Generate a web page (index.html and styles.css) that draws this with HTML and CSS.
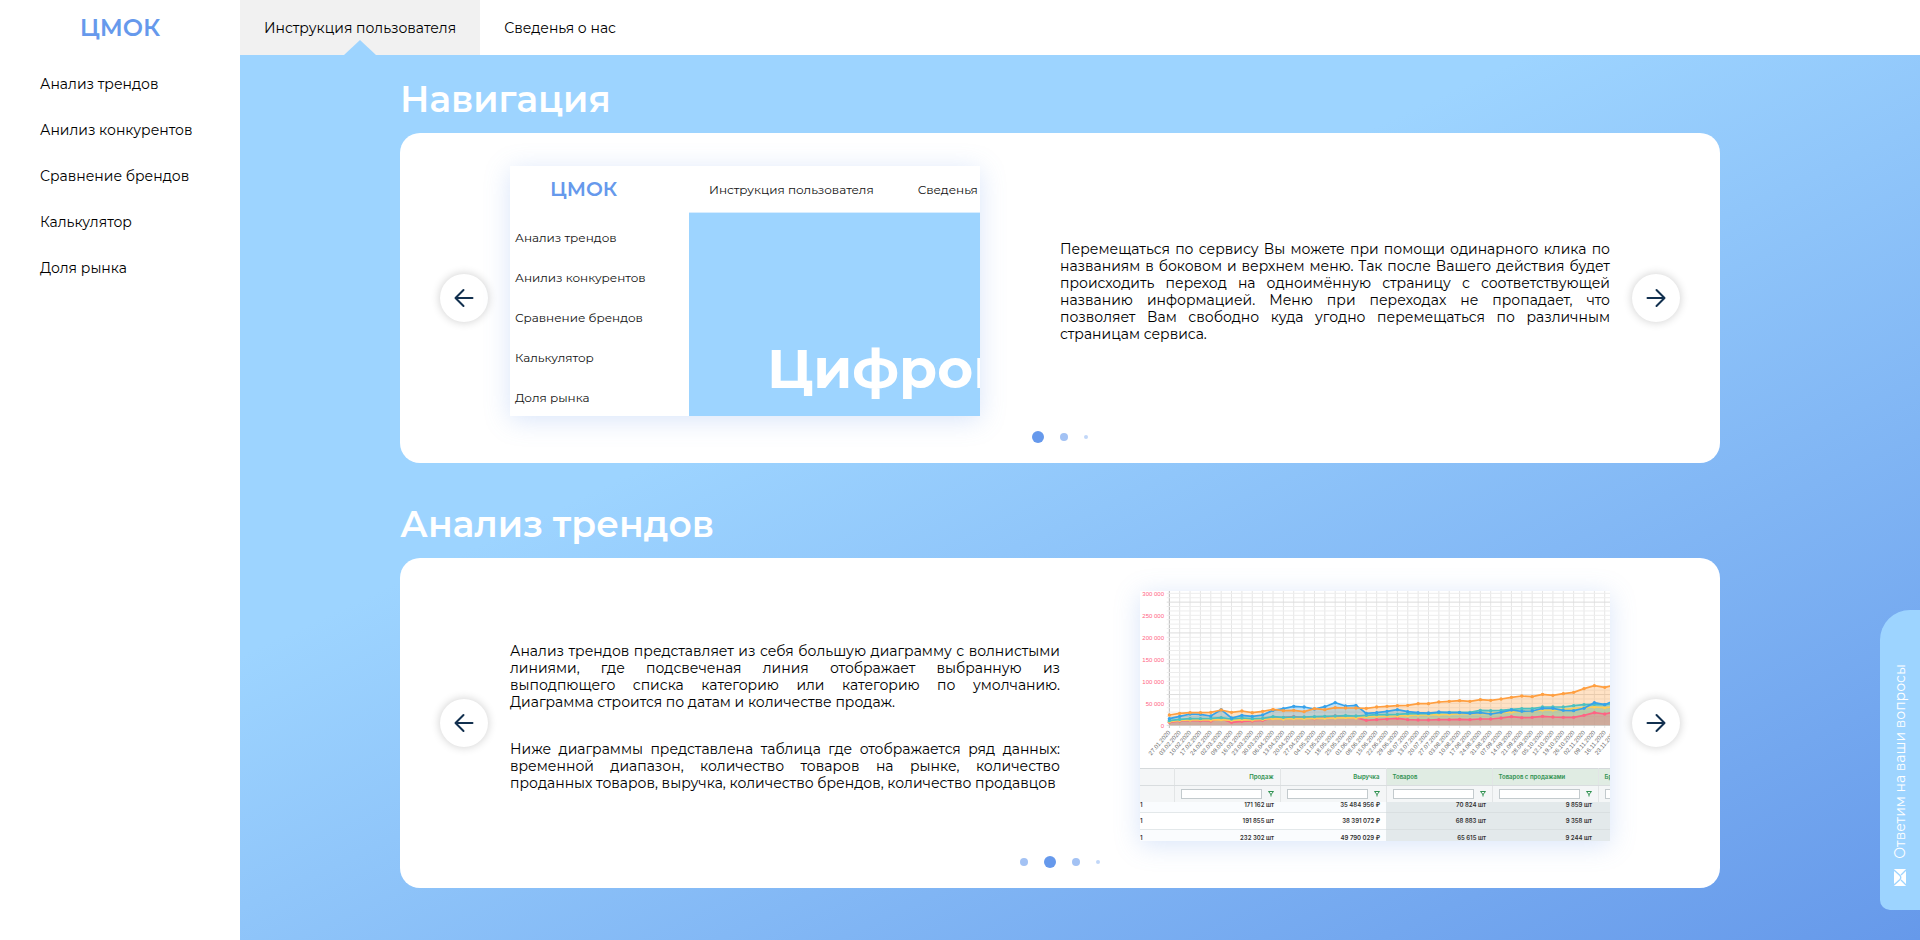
FILE: index.html
```
<!DOCTYPE html>
<html lang="ru">
<head>
<meta charset="utf-8">
<title>ЦМОК — Инструкция пользователя</title>
<link rel="stylesheet" href="styles.css">
</head>
<body>
<aside class="sidebar">
  <a class="logo" href="#">ЦМОК</a>
  <nav class="side-nav">
    <a href="#">Анализ трендов</a>
    <a href="#">Анилиз конкурентов</a>
    <a href="#">Сравнение брендов</a>
    <a href="#">Калькулятор</a>
    <a href="#">Доля рынка</a>
  </nav>
</aside>
<div class="page">
  <header class="topbar">
    <a class="tab tab-active" href="#">Инструкция пользователя</a>
    <a class="tab" href="#">Сведенья о нас</a>
  </header>
  <main class="content">
    <section class="section">
      <h2 class="section-title">Навигация</h2>
      <div class="card">
        <button class="arrow" type="button" aria-label="Назад">
          <svg viewBox="0 0 20 20"><path d="M18.500 10H2M9.500 2L1.500 10L9.500 18"/></svg>
        </button>
        <div class="card-body">
          <div class="slide">
            <div class="picture site">
              <div class="site-side">
                <span class="site-logo">ЦМОК</span>
                <span>Анализ трендов</span>
                <span>Анилиз конкурентов</span>
                <span>Сравнение брендов</span>
                <span>Калькулятор</span>
                <span>Доля рынка</span>
              </div>
              <div class="site-main">
                <div class="site-top"><span>Инструкция пользователя</span><span>Сведенья</span></div>
                <div class="site-hero">Цифров</div>
              </div>
            </div>
            <div class="text">
              <p>Перемещаться по сервису Вы можете при помощи одинарного клика по названиям в боковом и верхнем меню. Так после Вашего действия будет происходить переход на одноимённую страницу с соответствующей названию информацией. Меню при переходах не пропадает, что позволяет Вам свободно куда угодно перемещаться по различным страницам сервиса.</p>
            </div>
          </div>
          <div class="dots"><i class="dot dot-current"></i><i class="dot"></i><i class="dot dot-far"></i></div>
        </div>
        <button class="arrow" type="button" aria-label="Вперёд">
          <svg viewBox="0 0 20 20"><path d="M1.500 10H18M10.500 2L18.500 10L10.500 18"/></svg>
        </button>
      </div>
    </section>
    <section class="section">
      <h2 class="section-title">Анализ трендов</h2>
      <div class="card">
        <button class="arrow" type="button" aria-label="Назад">
          <svg viewBox="0 0 20 20"><path d="M18.500 10H2M9.500 2L1.500 10L9.500 18"/></svg>
        </button>
        <div class="card-body">
          <div class="slide">
            <div class="text">
              <p>Анализ трендов представляет из себя большую диаграмму с волнистыми линиями, где подсвеченая линия отображает выбранную из выподпющего списка категорию или категорию по умолчанию. Диаграмма строится по датам и количестве продаж.</p>
              <p>Ниже диаграммы представлена таблица где отображается ряд данных: временной диапазон, количество товаров на рынке, количество проданных товаров, выручка, количество брендов, количество продавцов</p>
            </div>
            <div class="picture report">
              <svg class="chart" id="chart" viewBox="0 0 1410 531" role="img" aria-label="Диаграмма продаж по датам"></svg>
              <table class="sales">
                <thead>
                  <tr><th></th><th>Продаж</th><th>Выручка</th><th class="goods">Товаров</th><th class="goods">Товаров с продажами</th><th class="goods">Бр</th></tr>
                  <tr class="filters">
                    <td></td>
                    <td><label><input type="text" aria-label="Фильтр: продаж"><svg viewBox="0 0 6 6"><path d="M.5 .5H5.500L3 3.500ZM3 3V5.500"/></svg></label></td>
                    <td><label><input type="text" aria-label="Фильтр: выручка"><svg viewBox="0 0 6 6"><path d="M.5 .5H5.500L3 3.500ZM3 3V5.500"/></svg></label></td>
                    <td><label><input type="text" aria-label="Фильтр: товаров"><svg viewBox="0 0 6 6"><path d="M.5 .5H5.500L3 3.500ZM3 3V5.500"/></svg></label></td>
                    <td><label><input type="text" aria-label="Фильтр: товаров с продажами"><svg viewBox="0 0 6 6"><path d="M.5 .5H5.500L3 3.500ZM3 3V5.500"/></svg></label></td>
                    <td><label><input type="text" aria-label="Фильтр: брендов"><svg viewBox="0 0 6 6"><path d="M.5 .5H5.500L3 3.500ZM3 3V5.500"/></svg></label></td>
                  </tr>
                </thead>
                <tbody>
                  <tr class="row-cut"><td class="edge">1</td><td>171 162 шт</td><td>35 484 956 ₽</td><td>70 824 шт</td><td>9 859 шт</td><td></td></tr>
                  <tr><td class="edge">1</td><td>191 855 шт</td><td>38 391 072 ₽</td><td>68 883 шт</td><td>9 358 шт</td><td></td></tr>
                  <tr><td class="edge">1</td><td>232 302 шт</td><td>49 790 029 ₽</td><td>65 615 шт</td><td>9 244 шт</td><td></td></tr>
                </tbody>
              </table>
            </div>
          </div>
          <div class="dots"><i class="dot"></i><i class="dot dot-current"></i><i class="dot"></i><i class="dot dot-far"></i></div>
        </div>
        <button class="arrow" type="button" aria-label="Вперёд">
          <svg viewBox="0 0 20 20"><path d="M1.500 10H18M10.500 2L18.500 10L10.500 18"/></svg>
        </button>
      </div>
    </section>
  </main>
</div>
<button class="chat" type="button">
  <svg viewBox="0 0 12 17"><rect width="12" height="17" rx="1" fill="#fff"/><path d="M0 1L6 6.500Q7.500 8.500 6 10.500L0 16M12 1L7 6M12 16L7 11" fill="none" stroke="#9dd4ff" stroke-width="1.300"/></svg>
  <span>Ответим на ваши вопросы</span>
</button>
<script src="chart.js"></script>
</body>
</html>
```
FILE: styles.css
```
* { box-sizing: border-box; }

body {
  margin: 0;
  min-height: 100vh;
  display: grid;
  grid-template-columns: 240px 1fr;
  font: 400 14px/17px "Montserrat", "Open Sans", sans-serif;
  color: #000;
  background: #fff;
}

a { color: inherit; text-decoration: none; }
button { border: 0; padding: 0; font: inherit; cursor: pointer; }

/* Sidebar */
.sidebar { display: flex; flex-direction: column; }
.logo {
  height: 55px;
  line-height: 55px;
  text-align: center;
  font-size: 24px;
  font-weight: 600;
  color: #6699ec;
}
.side-nav { display: flex; flex-direction: column; padding-top: 6px; }
.side-nav a { padding-left: 40px; line-height: 46px; }

/* Top bar */
.page { display: flex; flex-direction: column; min-width: 0; }
.topbar { display: flex; height: 55px; }
.tab { position: relative; line-height: 57px; padding: 0 24px; }
.tab-active { background: #f1f1f1; }
.tab-active::after {
  content: "";
  position: absolute;
  left: 50%;
  bottom: 0;
  margin-left: -16px;
  border: 16px solid transparent;
  border-top: 0;
  border-bottom: 15px solid #9dd4ff;
}

/* Content */
.content {
  flex: 1;
  display: flex;
  flex-direction: column;
  gap: 37px;
  padding: 20px 80px 52px 40px;
  background: linear-gradient(155deg, #9dd4ff 36%, #6699ea 100%);
}
.section { width: 100%; max-width: 1320px; margin: 0 auto; }
.section-title {
  margin: 0 0 10px;
  font-size: 36px;
  line-height: 48px;
  font-weight: 600;
  color: #fff;
}
.card {
  display: flex;
  align-items: center;
  gap: 22px;
  padding: 0 40px;
  border-radius: 20px;
  background: #fff;
}
.card-body { flex: 1; min-width: 0; padding: 33px 0 20px; }
.slide { display: flex; align-items: center; gap: 80px; }
.arrow {
  flex: none;
  display: grid;
  place-items: center;
  width: 48px;
  height: 48px;
  border-radius: 50%;
  background: #fff;
  box-shadow: 0 0 10px rgba(0, 0, 0, .2);
}
.arrow svg {
  width: 20px;
  height: 20px;
  fill: none;
  stroke: #12304f;
  stroke-width: 2;
  stroke-linecap: round;
  stroke-linejoin: round;
}
.text { flex: 1; padding-top: 2px; text-align: justify; }
.text p { margin: 0; }
.text p + p { margin-top: 30px; }

.dots {
  display: flex;
  align-items: center;
  justify-content: center;
  gap: 16px;
  height: 12px;
  margin-top: 15px;
}
.dot { width: 8px; height: 8px; border-radius: 50%; background: #a3c2f4; }
.dot-current { width: 12px; height: 12px; background: #6699ec; }
.dot-far { width: 4px; height: 4px; background: #c2d7f8; }

.picture {
  flex: none;
  width: 470px;
  height: 250px;
  overflow: hidden;
  background: #fff;
  box-shadow: 0 4px 24px rgba(102, 153, 236, .25);
}

/* Site picture */
.site { display: flex; font-size: 12px; white-space: nowrap; color: #111; }
.site-side { flex: none; width: 179px; display: flex; flex-direction: column; padding-left: 5px; line-height: 40px; }
.site-side span { flex: none; }
.site-logo { height: 52px; padding-left: 35px; line-height: 46px; font-size: 20px; font-weight: 600; color: #6699ec; }
.site-main { flex: 1; min-width: 0; display: flex; flex-direction: column; }
.site-top { display: flex; gap: 44px; height: 47px; padding-left: 20px; line-height: 47px; border-bottom: 1px solid #d8edff; }
.site-hero {
  flex: 1;
  padding: 120px 0 0 78px;
  line-height: 72px;
  font-size: 55px;
  font-weight: 700;
  color: #fff;
  background: #9dd4ff;
}

/* Report picture */
.chart { display: block; width: 470px; height: 177px; }
.chart text { font-family: "Liberation Sans", sans-serif; }
.sales {
  width: 562px;
  table-layout: fixed;
  border-collapse: collapse;
  font: 600 6px/8px Inter, sans-serif;
  color: #333;
}
.sales th, .sales td { width: 106px; height: 17px; padding: 0 6px; text-align: right; font-weight: 600; }
.sales th:first-child { width: 34px; }
.sales thead { background: #f4f6f7; color: #2f9150; }
.sales th { border-top: 1px solid #d5d9db; border-right: 1px solid #e2e5e6; border-bottom: 1px solid #d9dddf; }
.sales th.goods { text-align: left; background: #e0ece3; }
.sales .filters td { height: 16px; border-right: 1px solid #e2e5e6; }
.sales label { display: flex; align-items: center; gap: 6px; }
.sales input { flex: 1; min-width: 0; height: 10px; padding: 0; border: 1px solid #c3cacd; background: #fff; font: inherit; }
.sales label svg { width: 6px; height: 6px; fill: none; stroke: #2f9150; }
.sales tbody td { border-bottom: 1px solid #e3e8ea; background: #fff; }
.sales tbody tr:nth-child(odd) td { background: #fafcfe; }
.sales tbody .row-cut td { height: 11px; line-height: 6px; vertical-align: top; }
.sales tbody tr td:nth-child(n+4) { background: #e3e9eb; border-color: #d9dfe1; }
.sales tbody .edge { padding: 0; text-align: left; }

/* Contact tab */
.chat {
  position: fixed;
  right: 0;
  bottom: 30px;
  display: flex;
  flex-direction: column-reverse;
  align-items: center;
  justify-content: flex-start;
  gap: 10px;
  width: 40px;
  height: 300px;
  padding-bottom: 24px;
  border-radius: 30px 0 0 10px;
  color: #fff;
  background: #9dd4ff;
}
.chat svg { width: 12px; height: 17px; }
.chat span { writing-mode: vertical-rl; transform: rotate(180deg); white-space: nowrap; }
```
FILE: chart.js
```
// Sales chart: weekly points, one filled line per category.
const svg = document.getElementById('chart');
const X0 = 88, STEP = 31.1, BASE = 403, OFFSET = 63;
const series = [
  ['#ff9f40', [435,430,428,428,427,420,427,423,428,424,418,422,421,425,416,419,413,414,414,415,411,409,407,406,401,401,396,394,392,394,389,391,387,382,378,380,373,376,371,367,356,347,352,345]],
  ['#36a2eb', [446,439,432,433,438,419,444,436,439,435,421,416,409,411,417,410,398,408,406,430,428,424,419,425,428,429,426,428,428,430,428,432,427,420,424,423,415,415,421,422,415,398,404,390]],
  ['#4bc0c0', [452,448,446,446,445,443,447,444,446,445,440,442,441,441,440,439,438,437,438,436,434,434,433,431,430,431,428,427,427,427,421,422,421,418,416,416,411,411,411,407,404,403,404,400]],
  ['#ffcd56', [455,451,450,449,450,449,451,449,450,448,446,447,446,446,445,445,444,443,444,440,439,438,438,437,435,435,434,433,431,431,430,430,428,426,424,423,420,420,418,416,413,411,413,410]],
  ['#ff6384', [457,453,451,452,453,447,457,454,453,451,444,443,440,443,446,443,438,443,443,451,449,447,445,449,450,450,449,449,448,449,447,447,444,440,443,442,439,441,442,442,436,428,432,425]]
];
let out = '';
for (let i = 0; i < 44; i++) {
  const x = X0 + STEP * i;
  out += `<line x1="${x}" y1="0" x2="${x}" y2="${BASE + 8}" stroke="${i ? '#e6e6e6' : '#bbb'}" stroke-width="3"/>`;
}
for (let i = 0; i < 31; i++) {
  const y = BASE - 13.2 * i;
  out += `<line x1="80" y1="${y}" x2="1410" y2="${y}" stroke="${i % 7 === 0 ? '#ddd' : '#ededed'}" stroke-width="3"/>`;
}
for (let k = 0; k <= 6; k++) {
  const label = k ? k * 50 + ' 000' : '0';
  out += `<text x="72" y="${BASE - 66 * k + 7}" font-size="18" text-anchor="end" fill="#ff6384">${label}</text>`;
}
for (const [color, ys] of series) {
  const pts = ys.map((y, i) => `${X0 + STEP * i},${y - OFFSET}`).join(' ');
  const end = X0 + STEP * (ys.length - 1);
  out += `<polygon points="${X0},${BASE} ${pts} ${end},${BASE}" fill="${color}" fill-opacity=".3"/>`;
}
for (const [color, ys] of series.slice().reverse()) {
  const pts = ys.map((y, i) => `${X0 + STEP * i},${y - OFFSET}`).join(' ');
  out += `<polyline points="${pts}" fill="none" stroke="${color}" stroke-width="5"/>`;
  ys.forEach((y, i) => { out += `<circle cx="${X0 + STEP * i}" cy="${y - OFFSET}" r="5" fill="${color}"/>`; });
}
const two = n => String(n).padStart(2, '0');
for (let i = 0; i < 44; i++) {
  const d = new Date(2020, 0, 27 + 7 * i);
  const x = X0 + STEP * i + 4, y = BASE + 22;
  out += `<text x="${x}" y="${y}" font-size="18" text-anchor="end" fill="#666" transform="rotate(-50 ${x} ${y})">${two(d.getDate())}.${two(d.getMonth() + 1)}.${d.getFullYear()}</text>`;
}
svg.innerHTML = out;
```
